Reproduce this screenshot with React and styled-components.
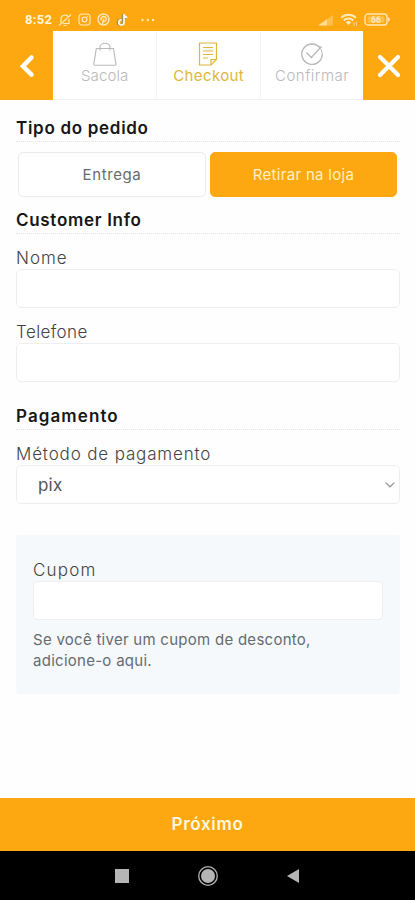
import React from 'react';
import styled, { createGlobalStyle } from 'styled-components';

const ORANGE = '#fea811';

const GlobalStyle = createGlobalStyle`
  * {
    box-sizing: border-box;
  }
  body {
    margin: 0;
    background: #fefefe;
    font-family: Inter, 'Open Sans', sans-serif;
    color: #555;
  }
`

const Screen = styled.div`
  display: flex;
  flex-direction: column;
  width: 100%;
  height: 900px;
  overflow: hidden;
`

const StatusBar = styled.div`
  display: flex;
  align-items: center;
  height: 31px;
  padding: 8px 24px 0 25px;
  background: ${ORANGE};
  color: #ffeab8;
`

const Clock = styled.span`
  width: 33px;
  font: 700 13px/14px Roboto, sans-serif;
  letter-spacing: 0.3px;
  color: #fff6dc;
`

const StatusIcons = styled.div`
  display: flex;
  align-items: center;
  gap: ${props => props.gap}px;
  margin-left: ${props => (props.right ? 'auto' : '0')};

  svg {
    display: block;
  }
`

const Header = styled.div`
  display: flex;
  height: 69px;
  background: ${ORANGE};
`

const HeaderButton = styled.button`
  display: flex;
  align-items: center;
  justify-content: center;
  width: ${props => props.width}px;
  padding: 0;
  border: 0;
  background: ${ORANGE};
  color: #fff;
`

const Tabs = styled.div`
  display: grid;
  grid-template-columns: repeat(3, 1fr);
  flex: 1;
  background: #fff;
  border-bottom: 1px solid #f1f1f1;
`

const Tab = styled.div`
  display: flex;
  flex-direction: column;
  align-items: center;
  padding-top: 11px;
  color: ${props => (props.active ? '#e0b63c' : '#b9b9bd')};
  border-left: ${props => (props.first ? '0' : '1px solid #f5f5f5')};
`

const TabLabel = styled.span`
  margin-top: 1px;
  font-size: 15px;
  font-weight: ${props => (props.active ? 400 : 300)};
  line-height: 18px;
  letter-spacing: ${props => props.track}px;
  margin-right: -${props => props.track}px;
  white-space: nowrap;
`

const Content = styled.main`
  flex: 1;
  padding: 18px 15px 0 16px;
`

const Heading = styled.h2`
  height: 24px;
  margin: ${props => props.top || 0}px 0 0;
  font-size: 17px;
  font-weight: 600;
  line-height: 20px;
  letter-spacing: ${props => props.track}px;
  color: #171717;
  border-bottom: 1px dotted #e2e2e2;
`

const Options = styled.div`
  display: grid;
  grid-template-columns: 188px 187px;
  gap: 4px;
  margin: 10px 0 0 2px;
`

const Option = styled.button`
  height: 45px;
  padding: 0;
  border: 1px solid ${props => (props.selected ? ORANGE : '#ebebeb')};
  border-radius: 5px;
  background: ${props => (props.selected ? ORANGE : '#fff')};
  color: ${props => (props.selected ? '#fff0c4' : '#6a6a6a')};
  font: 400 15px/20px Inter, sans-serif;
  letter-spacing: ${props => props.track}px;
`

const Field = styled.div`
  display: flex;
  flex-direction: column;
  margin-top: ${props => props.top}px;
`

const Label = styled.label`
  padding-bottom: 2px;
  font-size: 17px;
  font-weight: 300;
  line-height: 18px;
  letter-spacing: ${props => props.track}px;
  color: #444;
`

const Input = styled.input`
  width: 100%;
  height: 39px;
  padding: 0 12px;
  border: 1px solid #eee;
  border-radius: 5px;
  background: #fff;
  outline: 0;
`

const Select = styled.div`
  display: flex;
  align-items: center;
  justify-content: space-between;
  height: 39px;
  padding: 0 4px 0 21px;
  border: 1px solid #eee;
  border-radius: 5px;
  background: #fff;
  font-size: 17px;
  letter-spacing: 0.2px;
  color: #555;
`

const Coupon = styled.section`
  height: 159px;
  margin-top: 31px;
  padding: 26px 17px 0;
  border-radius: 4px;
  background: #f5f9fc;
`

const Help = styled.p`
  margin: 9px 0 0;
  font-size: 15px;
  font-weight: 400;
  line-height: 21px;
  letter-spacing: ${props => props.track}px;
  color: #666b70;
  white-space: nowrap;
`

const NextButton = styled.button`
  height: 53px;
  padding: 0 0 1px;
  border: 0;
  background: ${ORANGE};
  color: #fff8df;
  font: 600 17px/20px Inter, sans-serif;
  letter-spacing: 0.7px;
`

const NavBar = styled.nav`
  display: grid;
  grid-template-columns: 14px 22px 14px;
  justify-content: center;
  align-items: center;
  justify-items: center;
  column-gap: 68px;
  height: 49px;
  padding: 0;
  background: #000;
`

const BagIcon = () => (
  <svg width="26" height="24" viewBox="0 0 26 24" fill="none" stroke="currentColor" strokeWidth="1.1">
    <path d="M4.3 6.5h17.2L24 22.6a.6.6 0 0 1-.6.6H2.3a.6.6 0 0 1-.6-.6z" />
    <path d="M8 8.500V5.500a5 4.300 0 0 1 10 0v3" />
  </svg>
)

const NoteIcon = () => (
  <svg width="26" height="24" viewBox="0 0 26 24" fill="none" stroke="currentColor" strokeWidth="1.2">
    <path d="M4.500 1h17v16.500L16 23H4.500z" />
    <path d="M21.500 17.500H16V23M8 5.500h10M8 9h10M8 12.500h10M8 16h5" />
  </svg>
)

const CheckIcon = () => (
  <svg width="26" height="24" viewBox="0 0 26 24" fill="none" stroke="currentColor" strokeWidth="1.4">
    <path d="M21.300 6.200A10.200 10.200 0 1 0 23.200 12" />
    <path d="M7.500 10.500l4.800 5L22.500 4.500" />
    <path d="M20 4.400A10.200 10.200 0 0 1 23.200 12" strokeWidth="0.9" />
  </svg>
)

const NoBellIcon = () => (
  <svg width="14" height="14" viewBox="0 0 14 14" fill="none" stroke="currentColor" strokeWidth="1.2">
    <path d="M3 10.500V6a4 4 0 0 1 7.500-1.800M11 6v4.500H5M1 12.500L13 1.500M5.500 12.500h3" />
  </svg>
)

const InstaIcon = () => (
  <svg width="13" height="13" viewBox="0 0 13 13" fill="none" stroke="currentColor" strokeWidth="1.2">
    <rect x="1" y="1" width="11" height="11" rx="3" />
    <circle cx="6.500" cy="6.500" r="2.400" />
    <path d="M9 3.500h1" />
  </svg>
)

const PinIcon = () => (
  <svg width="13" height="13" viewBox="0 0 13 13" fill="none" stroke="currentColor" strokeWidth="1.4">
    <circle cx="6.500" cy="6.500" r="5.500" />
    <path d="M5.300 11.500L6.800 5.500M4.300 7.500C3.300 5 4.800 3.500 6.600 3.500c3.600 0 3 4.800.8 4.800-.8 0-1.300-.5-1.300-.5" />
  </svg>
)

const TiktokIcon = () => (
  <svg width="13" height="14" viewBox="0 0 13 14" fill="none" strokeWidth="2.2">
    <path d="M7 1v8.500a2.600 2.600 0 1 1-2.600-2.700M7 1.500c.3 2 1.700 3 3.900 3.400" stroke="#a08a62" />
    <path d="M8 1v8.500a2.600 2.600 0 1 1-2.600-2.700M8 1.500c.3 2 1.500 2.800 3.300 3" stroke="#fffbe9" strokeWidth="1.700" />
  </svg>
)

const DotsIcon = () => (
  <svg width="15" height="4" viewBox="0 0 15 4" fill="currentColor">
    <circle cx="1.500" cy="2" r="1.200" />
    <circle cx="6.800" cy="2" r="1.200" />
    <circle cx="12" cy="2" r="1.200" />
  </svg>
)

const SignalIcon = () => (
  <svg width="16" height="12" viewBox="0 0 16 12" fill="currentColor">
    <path d="M0 11.500L15 1v10.500z" opacity="0.35" />
    <path d="M0 11.500L9 5.200v6.300z" opacity="0.7" />
  </svg>
)

const WifiIcon = () => (
  <svg width="18" height="14" viewBox="0 0 18 14" fill="none" stroke="currentColor" strokeWidth="1.900">
    <path d="M1.200 4.800a10.300 10.300 0 0 1 14.600 0M3.700 7.500a6.800 6.800 0 0 1 9.600 0" />
    <path d="M5.800 9.300a4 4 0 0 1 5.400 0L8.500 12z" fill="currentColor" stroke="none" />
    <path d="M14 9v4M16.500 9v4" strokeWidth="1" opacity="0.7" />
  </svg>
)

const BatteryIcon = () => (
  <svg width="27" height="13" viewBox="0 0 27 13">
    <rect x="1" y="1" width="22" height="11" rx="3" fill="none" stroke="currentColor" strokeWidth="1.300" />
    <path d="M24 4l2.300 2.500L24 9z" fill="currentColor" />
    <rect x="3.500" y="3.200" width="17" height="6.600" rx="1.500" fill="currentColor" opacity="0.35" />
    <text x="12" y="9.700" textAnchor="middle" fontFamily="Roboto" fontSize="8.500" fontWeight="700" fill="currentColor">66</text>
  </svg>
)

const BackIcon = () => (
  <svg width="16" height="24" viewBox="0 0 16 24" fill="none" stroke="currentColor" strokeWidth="4.500">
    <path d="M12.500 3.500L4 12.300l8.500 8.400" strokeLinecap="round" />
  </svg>
)

const CloseIcon = () => (
  <svg width="26" height="26" viewBox="0 0 26 26" fill="none" stroke="currentColor" strokeWidth="4.200" strokeLinecap="round">
    <path d="M4 4l18 18M22 4L4 22" />
  </svg>
)

const ChevronIcon = () => (
  <svg width="10" height="6" viewBox="0 0 10 6" fill="none" stroke="#969696" strokeWidth="1.300">
    <path d="M.6.6L5 4.800 9.400.6" />
  </svg>
)

const tabs = [
  { label: 'Sacola', icon: BagIcon, track: 0.1 },
  { label: 'Checkout', icon: NoteIcon, track: 0.4, active: true },
  { label: 'Confirmar', icon: CheckIcon, track: 0.5 }
]

export default function App() {
  return (
    <Screen>
      <GlobalStyle />
      <StatusBar>
        <Clock>8:52</Clock>
        <StatusIcons gap={6}>
          <NoBellIcon />
          <InstaIcon />
          <PinIcon />
          <TiktokIcon />
          <span />
          <DotsIcon />
        </StatusIcons>
        <StatusIcons right gap={6}>
          <SignalIcon />
          <WifiIcon />
          <BatteryIcon />
        </StatusIcons>
      </StatusBar>

      <Header>
        <HeaderButton width={53}>
          <BackIcon />
        </HeaderButton>
        <Tabs>
          {tabs.map(({ label, icon: Icon, track, active }, i) => (
            <Tab key={label} active={active} first={i === 0}>
              <Icon />
              <TabLabel track={track} active={active}>{label}</TabLabel>
            </Tab>
          ))}
        </Tabs>
        <HeaderButton width={52}>
          <CloseIcon />
        </HeaderButton>
      </Header>

      <Content>
        <Heading track={0.7}>Tipo do pedido</Heading>
        <Options>
          <Option track={0.6}>Entrega</Option>
          <Option selected track={0.3}>Retirar na loja</Option>
        </Options>

        <Heading top={13} track={0.7}>Customer Info</Heading>
        <Field top={15}>
          <Label track={1}>Nome</Label>
          <Input />
        </Field>
        <Field top={15}>
          <Label track={0.4}>Telefone</Label>
          <Input />
        </Field>

        <Heading top={24} track={1.1}>Pagamento</Heading>
        <Field top={15}>
          <Label track={0.85}>Método de pagamento</Label>
          <Select>
            pix
            <ChevronIcon />
          </Select>
        </Field>

        <Coupon>
          <Field top={0}>
            <Label track={1.2}>Cupom</Label>
            <Input />
          </Field>
          <Help track={0.27}>
            Se você tiver um cupom de desconto,
            <br />
            adicione-o aqui.
          </Help>
        </Coupon>
      </Content>

      <NextButton>Próximo</NextButton>
      <NavBar>
        <svg width="14" height="14" viewBox="0 0 14 14">
          <rect width="14" height="14" fill="#b5b5b5" />
        </svg>
        <svg width="22" height="22" viewBox="0 0 22 22">
          <circle cx="11" cy="11" r="9.300" fill="none" stroke="#b5b5b5" strokeWidth="1.300" />
          <circle cx="11" cy="11" r="7" fill="#b5b5b5" />
        </svg>
        <svg width="14" height="14" viewBox="0 0 14 14">
          <path d="M12 0v14L0 7z" fill="#b5b5b5" />
        </svg>
      </NavBar>
    </Screen>
  )
}
